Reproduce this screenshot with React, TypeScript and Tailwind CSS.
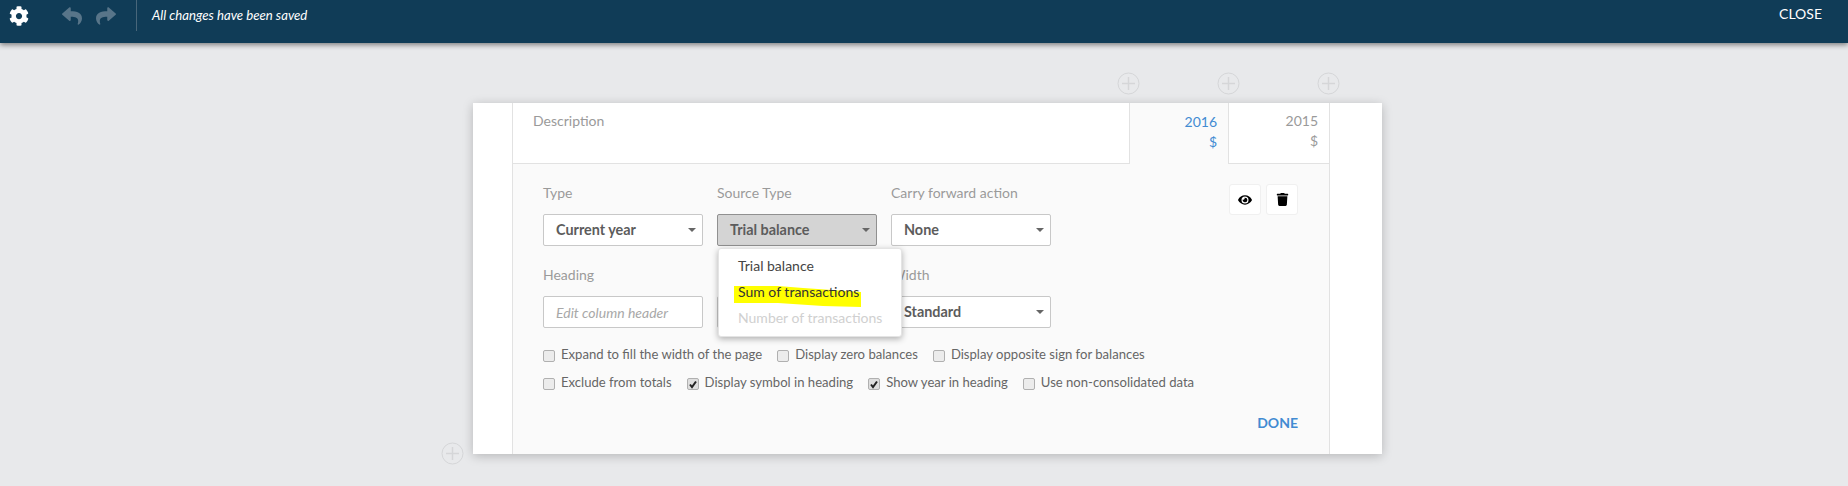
import { FaCog, FaEye, FaReply, FaShare, FaTrash } from "react-icons/fa";

function PlusCircle({ className }: { className: string }) {
    return (
        <svg className={`absolute h-[23px] w-[23px] ${className}`} viewBox="0 0 23 23" fill="none" stroke="#d5d6d8">
            <circle cx="11.5" cy="11.5" r="10.5" strokeWidth="1" />
            <path d="M11.5 5v13M5 11.5h13" strokeWidth="1.5" />
        </svg>
    );
}

function Field({ label, className = "", children }: { label?: string; className?: string; children: React.ReactNode }) {
    return (
        <div className={`flex flex-col ${className}`}>
            <label className="mb-[11px] h-[20px] text-[14px] leading-[20px] text-[#9a9a9a]">{label}</label>
            {children}
        </div>
    );
}

function Select({ value, active = false }: { value?: string; active?: boolean }) {
    return (
        <div
            className={`flex h-[32px] items-center justify-between rounded-[2px] border pl-[12px] pr-[6px] text-[14.4px] font-bold text-[#5c5c5c] ${
                active ? "border-[#909090] bg-[#d4d4d4]" : "border-[#c8c8c8] bg-white"
            }`}
        >
            <span>{value}</span>
            <span className="h-0 w-0 border-x-[4px] border-t-[4px] border-x-transparent border-t-[#666]" />
        </div>
    );
}

function Check({ label, checked = false }: { label: string; checked?: boolean }) {
    return (
        <div className="flex items-center gap-[6px] text-[13.1px] leading-[20px] text-[#666]">
            <span
                className={`mt-[3px] flex h-[12px] w-[12px] items-center justify-center rounded-[2px] border border-[#b0b0b0] ${
                    checked ? "bg-[#dedede]" : "bg-[#ececec]"
                }`}
            >
                {checked && (
                    <svg viewBox="0 0 10 10" className="h-[10px] w-[10px]" fill="none" stroke="#222" strokeWidth="2">
                        <path d="M2 5.5 4 8 8 2.5" />
                    </svg>
                )}
            </span>
            <span>{label}</span>
        </div>
    );
}

export default function App() {
    return (
        <div className="relative h-[486px] w-[1848px] overflow-hidden bg-[#e8e9eb] font-['Lato',sans-serif]">
            {/* Barra superior */}
            <header className="relative z-10 flex h-[43px] items-start justify-between bg-[#103c57] shadow-[0_2px_5px_rgba(0,0,0,0.45)]">
                <div className="flex h-[31px] items-center">
                    <FaCog className="ml-[9px] text-[20px] text-white" />
                    <FaReply className="ml-[33px] text-[20px] text-[#587589]" />
                    <FaShare className="ml-[14px] text-[20px] text-[#587589]" />
                    <div className="ml-[20px] h-[31px] w-px bg-[#48667a]" />
                    <span className="ml-[15px] text-[13.2px] italic text-white">All changes have been saved</span>
                </div>
                <span className="mr-[26px] flex h-[26px] items-center text-[14px] text-white">CLOSE</span>
            </header>

            <PlusCircle className="left-[1117px] top-[72px]" />
            <PlusCircle className="left-[1217px] top-[72px]" />
            <PlusCircle className="left-[1317px] top-[72px]" />
            <PlusCircle className="left-[441px] top-[442px]" />

            {/* Tarjeta */}
            <main className="ml-[473px] mt-[60px] flex h-[351px] w-[909px] bg-white shadow-[0_2px_10px_rgba(0,0,0,0.22)]">
                <div className="w-[40px] border-r border-[#e2e2e2]" />
                <div className="relative flex w-[816px] flex-col bg-[#fafafa]">
                    <div className="flex h-[61px]">
                        <div className="flex-1 border-b border-[#e2e2e2] bg-white pl-[20px] pt-[8px] text-[14px] leading-[20px] text-[#9a9a9a]">
                            Description
                        </div>
                        <div className="w-[99px] border-l border-[#e2e2e2] bg-[#fafafa] pr-[11px] pt-[9px] text-right text-[14px] leading-[20px] text-[#428bd2]">
                            <div>2016</div>
                            <div>$</div>
                        </div>
                        <div className="w-[101px] border-b border-l border-[#e2e2e2] bg-white pr-[11px] pt-[8px] text-right text-[14px] leading-[20px] text-[#9a9a9a]">
                            <div>2015</div>
                            <div>$</div>
                        </div>
                    </div>

                    <div className="relative flex-1 pl-[30px] pr-[31px] pt-[19px]">
                        <div className="grid w-[508px] grid-cols-[160px_160px_160px] gap-x-[14px] gap-y-[19px]">
                            <Field label="Type">
                                <Select value="Current year" />
                            </Field>
                            <Field label="Source Type">
                                <Select value="Trial balance" active />
                            </Field>
                            <Field label="Carry forward action">
                                <Select value="None" />
                            </Field>
                            <Field label="Heading">
                                <div className="flex h-[32px] items-center rounded-[2px] border border-[#c8c8c8] bg-white pl-[12px] text-[14px] italic text-[#a8a8a8]">
                                    Edit column header
                                </div>
                            </Field>
                            {/* Campo tapado por el menú */}
                            <Field>
                                <Select />
                            </Field>
                            <Field label="Width">
                                <Select value="Standard" />
                            </Field>
                        </div>

                        <div className="mt-[16px] flex flex-col gap-[8px]">
                            <div className="flex gap-[15px]">
                                <Check label="Expand to fill the width of the page" />
                                <Check label="Display zero balances" />
                                <Check label="Display opposite sign for balances" />
                            </div>
                            <div className="flex gap-[15px]">
                                <Check label="Exclude from totals" />
                                <Check label="Display symbol in heading" checked />
                                <Check label="Show year in heading" checked />
                                <Check label="Use non-consolidated data" />
                            </div>
                        </div>

                        <div className="mt-[20px] text-right text-[14px] font-bold text-[#428bd2]">DONE</div>

                        {/* Acciones de columna */}
                        <div className="absolute right-[31px] top-[20px] flex gap-[5px]">
                            <div className="flex h-[31px] w-[32px] items-center justify-center rounded-[3px] border border-[#f0f0f0] bg-white">
                                <FaEye className="text-[14px] text-black" />
                            </div>
                            <div className="flex h-[31px] w-[32px] items-center justify-center rounded-[3px] border border-[#f0f0f0] bg-white">
                                <FaTrash className="text-[13px] text-black" />
                            </div>
                        </div>

                        {/* Menú desplegable */}
                        <div className="absolute left-[205px] top-[84px] h-[89px] w-[184px] rounded-[3px] border border-[#e4e4e4] bg-white py-[4px] pl-[19px] text-[14px] leading-[26px] shadow-[0_2px_6px_rgba(0,0,0,0.3)]">
                            <svg className="absolute left-[14px] top-[36px] h-[24px] w-[130px]" viewBox="0 0 130 24">
                                <path d="M1 1 L45 1 L70 3 L128 7 L128 22 L90 21 L45 18 L1 18 Z" fill="#ffff00" />
                            </svg>
                            <div className="relative text-[#444]">Trial balance</div>
                            <div className="relative text-[#333]">Sum of transactions</div>
                            <div className="relative text-[#d0d0d0]">Number of transactions</div>
                        </div>
                    </div>
                </div>
                <div className="w-[53px] border-l border-[#e2e2e2]" />
            </main>
        </div>
    );
}
